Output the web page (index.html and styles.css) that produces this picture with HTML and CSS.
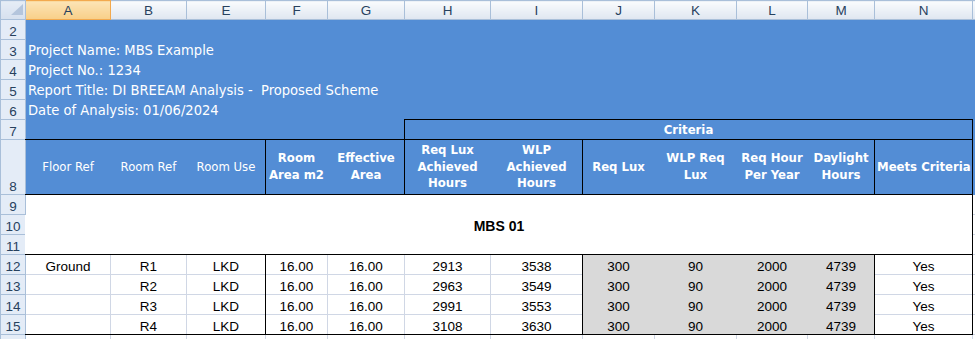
FILE: index.html
```html
<!DOCTYPE html>
<html>
<head>
<meta charset="utf-8">
<title>MBS Example</title>
<link rel="stylesheet" href="styles.css">
</head>
<body>
<table class="sheet">
<colgroup>
<col class="c-rh"><col class="c-a"><col class="c-b"><col class="c-e"><col class="c-f"><col class="c-g"><col class="c-h"><col class="c-i"><col class="c-j"><col class="c-k"><col class="c-l"><col class="c-m"><col class="c-n"><col class="c-o">
</colgroup>
<tr class="r-head">
<th class="corner"><span class="tri"></span></th>
<th class="colh sel">A</th><th class="colh">B</th><th class="colh">E</th><th class="colh">F</th><th class="colh">G</th><th class="colh">H</th><th class="colh">I</th><th class="colh">J</th><th class="colh">K</th><th class="colh">L</th><th class="colh">M</th><th class="colh">N</th><th class="colh"></th>
</tr>
<tr class="r20"><th class="rowh">2</th><td class="blue" colspan="13"></td></tr>
<tr class="r20"><th class="rowh">3</th><td class="blue info" colspan="13">Project Name: MBS Example</td></tr>
<tr class="r20"><th class="rowh">4</th><td class="blue info" colspan="13">Project No.: 1234</td></tr>
<tr class="r20"><th class="rowh">5</th><td class="blue info" colspan="13">Report Title: DI BREEAM Analysis -  Proposed Scheme</td></tr>
<tr class="r20"><th class="rowh">6</th><td class="blue info" colspan="13">Date of Analysis: 01/06/2024</td></tr>
<tr class="r20"><th class="rowh">7</th><td class="blue" colspan="5"></td><td class="blue crit" colspan="7">Criteria</td><td class="blue"></td></tr>
<tr class="r8">
<th class="rowh">8</th>
<td class="blue hd reg bt bb">Floor Ref</td>
<td class="blue hd reg bt bb">Room Ref</td>
<td class="blue hd reg bt bb br">Room Use</td>
<td class="blue hd bt bb">Room<br>Area m2</td>
<td class="blue hd bt bb br">Effective<br>Area</td>
<td class="blue hd bt bb">Req Lux<br>Achieved<br>Hours</td>
<td class="blue hd bt bb br">WLP<br>Achieved<br>Hours</td>
<td class="blue hd bt bb">Req Lux</td>
<td class="blue hd bt bb">WLP Req<br>Lux</td>
<td class="blue hd bt bb">Req Hour<br>Per Year</td>
<td class="blue hd bt bb br">Daylight<br>Hours</td>
<td class="blue hd bt bb br">Meets Criteria</td>
<td class="blue"></td>
</tr>
<tr class="r20"><th class="rowh">9</th><td class="title br" colspan="12" rowspan="3">MBS 01</td><td class="grid"></td></tr>
<tr class="r20"><th class="rowh">10</th><td class="grid"></td></tr>
<tr class="r20"><th class="rowh">11</th><td class="grid"></td></tr>
<tr class="r20">
<th class="rowh">12</th>
<td class="d bt">Ground</td><td class="d bt">R1</td><td class="d bt br">LKD</td>
<td class="d bt">16.00</td><td class="d bt">16.00</td><td class="d bt">2913</td><td class="d bt br">3538</td>
<td class="d g bt">300</td><td class="d g bt">90</td><td class="d g bt">2000</td><td class="d g bt br">4739</td>
<td class="d bt br">Yes</td><td class="grid"></td>
</tr>
<tr class="r20">
<th class="rowh">13</th>
<td class="d"></td><td class="d">R2</td><td class="d br">LKD</td>
<td class="d">16.00</td><td class="d">16.00</td><td class="d">2963</td><td class="d br">3549</td>
<td class="d g">300</td><td class="d g">90</td><td class="d g">2000</td><td class="d g br">4739</td>
<td class="d br">Yes</td><td class="grid"></td>
</tr>
<tr class="r20">
<th class="rowh">14</th>
<td class="d"></td><td class="d">R3</td><td class="d br">LKD</td>
<td class="d">16.00</td><td class="d">16.00</td><td class="d">2991</td><td class="d br">3553</td>
<td class="d g">300</td><td class="d g">90</td><td class="d g">2000</td><td class="d g br">4739</td>
<td class="d br">Yes</td><td class="grid"></td>
</tr>
<tr class="r20">
<th class="rowh">15</th>
<td class="d bb"></td><td class="d bb">R4</td><td class="d bb br">LKD</td>
<td class="d bb">16.00</td><td class="d bb">16.00</td><td class="d bb">3108</td><td class="d bb br">3630</td>
<td class="d g bb">300</td><td class="d g bb">90</td><td class="d g bb">2000</td><td class="d g bb br">4739</td>
<td class="d bb br">Yes</td><td class="grid"></td>
</tr>
<tr class="r20">
<th class="rowh">16</th>
<td class="grid"></td><td class="grid"></td><td class="grid"></td><td class="grid"></td><td class="grid"></td><td class="grid"></td><td class="grid"></td><td class="grid"></td><td class="grid"></td><td class="grid"></td><td class="grid"></td><td class="grid"></td><td class="grid"></td>
</tr>
</table>
</body>
</html>
```

FILE: styles.css
```css
html, body {
  margin: 0;
  padding: 0;
  background: #ffffff;
  overflow: hidden;
}

.sheet {
  border-collapse: collapse;
  table-layout: fixed;
  width: 992px;
  font-family: "Liberation Sans", Arial, sans-serif;
  font-size: 13px;
  color: #000000;
}

.c-rh { width: 25px; }
.c-a { width: 85px; }
.c-b { width: 76px; }
.c-e { width: 79px; }
.c-f { width: 62px; }
.c-g { width: 77px; }
.c-h { width: 86px; }
.c-i { width: 92px; }
.c-j { width: 72px; }
.c-k { width: 82px; }
.c-l { width: 71px; }
.c-m { width: 67px; }
.c-n { width: 98px; }
.c-o { width: 20px; }

.sheet td,
.sheet th {
  padding: 0 2px;
  border: 1px solid #d0d7e5;
  white-space: nowrap;
  vertical-align: bottom;
  line-height: 15px;
  font-weight: normal;
}

.r-head { height: 19px; }
.r20 { height: 20px; }
.r8 { height: 55px; }

/* column headers */
.sheet .colh {
  background: linear-gradient(#f9fbfd, #dfe6f0);
  border-color: #a9bfd9;
  color: #27415e;
  font-size: 13.5px;
  text-align: center;
  vertical-align: middle;
}

.sheet .sel {
  background: linear-gradient(#fce4b6, #f8cf88);
  border-color: #f2a94e;
}

.sheet .corner {
  background: linear-gradient(#e6edf6, #d6e0ee);
  border-color: #a9bfd9;
  text-align: right;
  vertical-align: bottom;
  padding: 0 2px 4px 0;
  line-height: 0;
}

.tri {
  display: inline-block;
  width: 0;
  height: 0;
  border-left: 12px solid transparent;
  border-bottom: 11px solid #b4c5dc;
}

/* row headers */
.sheet .rowh {
  background: #e4ecf7;
  border-color: #a9bfd9;
  color: #27415e;
  font-size: 13.5px;
  text-align: center;
  padding: 0;
}

/* blue banner */
.sheet .blue {
  background: #538dd5;
  border-color: #538dd5;
  color: #ffffff;
}

.sheet .info {
  font-family: "DejaVu Sans Condensed", "DejaVu Sans", sans-serif;
  font-stretch: condensed;
  font-size: 14.6px;
  line-height: 17px;
  white-space: pre;
  padding: 0 2px 1px;
}

.sheet .crit {
  font-family: "DejaVu Sans Condensed", "DejaVu Sans", sans-serif;
  font-stretch: condensed;
  font-weight: bold;
  font-size: 13px;
  text-align: center;
  vertical-align: middle;
  border: 1px double #000000;
}

.sheet .hd {
  font-family: "DejaVu Sans Condensed", "DejaVu Sans", sans-serif;
  font-stretch: condensed;
  font-weight: bold;
  font-size: 13px;
  line-height: 16.7px;
  text-align: center;
  vertical-align: middle;
}

.sheet .reg { font-weight: normal; }

/* black borders (double at 1px paints solid and wins collapse conflicts) */
.sheet .bt { border-top: 1px double #000000; }
.sheet .bb { border-bottom: 1px double #000000; }
.sheet .br { border-right: 1px double #000000; }

.sheet .title {
  background: #ffffff;
  border-color: #ffffff;
  border-right: 1px double #000000;
  text-align: center;
  vertical-align: middle;
  font-weight: bold;
  font-size: 14px;
  padding-top: 3px;
}

.sheet .d {
  text-align: center;
  font-size: 13.5px;
  background: #ffffff;
}

.sheet .g {
  background: #d9d9d9;
  border-color: #d9d9d9;
}

.sheet .g.bt { border-top: 1px double #000000; }
.sheet .g.bb { border-bottom: 1px double #000000; }
.sheet .g.br { border-right: 1px double #000000; }

.sheet .grid {
  background: #ffffff;
}
```
